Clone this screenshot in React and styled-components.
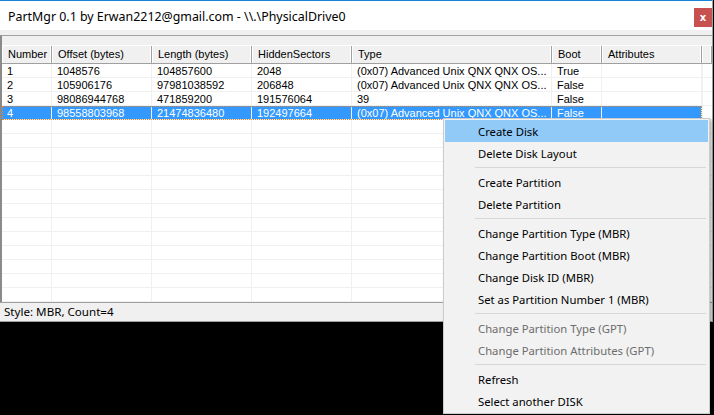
import styled, { createGlobalStyle } from "styled-components";

const GlobalStyle = createGlobalStyle`
    html, body {
        margin: 0;
        padding: 0;
        background: #000;
        overflow: hidden;
    }
`;

const columns = [
    { title: "Number", width: 50 },
    { title: "Offset (bytes)", width: 100 },
    { title: "Length (bytes)", width: 100 },
    { title: "HiddenSectors", width: 100 },
    { title: "Type", width: 200 },
    { title: "Boot", width: 50 },
    { title: "Attributes", width: 100 },
];

const rows = [
    ["1", "1048576", "104857600", "2048", "(0x07) Advanced Unix QNX QNX OS...", "True", ""],
    ["2", "105906176", "97981038592", "206848", "(0x07) Advanced Unix QNX QNX OS...", "False", ""],
    ["3", "98086944768", "471859200", "191576064", "39", "False", ""],
    ["4", "98558803968", "21474836480", "192497664", "(0x07) Advanced Unix QNX QNX OS...", "False", ""],
];

const menu = [
    { label: "Create Disk", active: true },
    { label: "Delete Disk Layout" },
    { sep: true },
    { label: "Create Partition" },
    { label: "Delete Partition" },
    { sep: true },
    { label: "Change Partition Type (MBR)" },
    { label: "Change Partition Boot (MBR)" },
    { label: "Change Disk ID (MBR)" },
    { label: "Set as Partition Number 1 (MBR)" },
    { sep: true },
    { label: "Change Partition Type (GPT)", disabled: true },
    { label: "Change Partition Attributes (GPT)", disabled: true },
    { sep: true },
    { label: "Refresh" },
    { label: "Select another DISK" },
];

const gridTemplate = columns.map((c) => `${c.width}px`).join(" ") + " 1fr";

const App = () => {
    return (
        <Screen>
            <GlobalStyle />
            <Window>
                <TitleBar>
                    <Title>PartMgr 0.1 by Erwan2212@gmail.com - \\.\PhysicalDrive0</Title>
                    <CloseButton>x</CloseButton>
                </TitleBar>
                <Body>
                    <ListBox>
                        <Strip />
                        <HeaderRow>
                            {columns.map((c) => (
                                <HeaderCell key={c.title}>{c.title}</HeaderCell>
                            ))}
                            <HeaderCell />
                        </HeaderRow>
                        <Rows>
                            {rows.map((r, i) => (
                                <Row key={i} $selected={i === 3}>
                                    {r.map((v, j) => (
                                        <Cell key={j}>{v}</Cell>
                                    ))}
                                    <Filler />
                                </Row>
                            ))}
                            {Array.from({ length: 14 }).map((_, i) => (
                                <Row key={"e" + i}>
                                    {columns.map((c) => (
                                        <Cell key={c.title} />
                                    ))}
                                    <Filler />
                                </Row>
                            ))}
                        </Rows>
                    </ListBox>
                    <StatusBar>Style: MBR, Count=4</StatusBar>
                </Body>
            </Window>

            <Menu>
                {menu.map((m, i) =>
                    m.sep ? (
                        <Separator key={i} />
                    ) : (
                        <MenuItem key={i} $active={m.active} $disabled={m.disabled}>
                            {m.label}
                        </MenuItem>
                    )
                )}
            </Menu>
        </Screen>
    );
};

export default App;

const Screen = styled.div`
    position: relative;
    width: 714px;
    height: 415px;
    background: #000;
    overflow: hidden;
`;

const Window = styled.div`
    width: 712px;
    display: flex;
    flex-direction: column;
    background: #f0f0f0;
    border-right: 1px solid #a0a0a0;
`;

const TitleBar = styled.div`
    height: 29px;
    border-top: 1px solid #1883d7;
    background: #fff;
    display: flex;
    align-items: center;
    justify-content: space-between;
    padding-left: 8px;
`;

const Title = styled.span`
    font-family: "Noto Sans", sans-serif;
    font-size: 12.4px;
    color: #000;
    margin-top: 2px;
`;

const CloseButton = styled.div`
    width: 18px;
    height: 19px;
    margin-right: 0;
    margin-top: 4px;
    background: #c75050;
    color: #fff;
    font-family: "DejaVu Sans", sans-serif;
    font-weight: 700;
    font-size: 10px;
    display: flex;
    align-items: center;
    justify-content: center;
`;

const Body = styled.div`
    display: flex;
    flex-direction: column;
    padding-top: 5px;
    height: 286px;
    border-bottom: 1px solid #a0a0a0;
`;

const ListBox = styled.div`
    height: 266px;
    border-top: 1px solid #a0a0a0;
    border-left: 2px solid #8a8a8a;
    background: #fff;
    display: flex;
    flex-direction: column;
    overflow: hidden;
`;

const Strip = styled.div`
    height: 9px;
    background: #f0f0f0;
    flex-shrink: 0;
`;

const HeaderRow = styled.div`
    display: grid;
    grid-template-columns: ${gridTemplate};
    height: 19px;
    flex-shrink: 0;
    background: #f0f0f0;
    border-top: 1px solid #fff;
    border-bottom: 1px solid #a0a0a0;
    box-sizing: border-box;
`;

const HeaderCell = styled.div`
    font-family: "Liberation Sans", sans-serif;
    font-size: 11px;
    color: #000;
    padding-left: 6px;
    line-height: 17px;
    border-right: 1px solid #a0a0a0;
    box-shadow: inset -1px 0 0 #fff, inset 1px 0 0 #fff;
    white-space: nowrap;
    overflow: hidden;
`;

const Rows = styled.div`
    display: flex;
    flex-direction: column;
`;

const Row = styled.div`
    display: grid;
    grid-template-columns: ${gridTemplate};
    height: 14px;
    flex-shrink: 0;
    position: relative;
    color: ${(p) => (p.$selected ? "#fff" : "#000")};

    & > div:not(:last-child) {
        background: ${(p) => (p.$selected ? "#3399ff" : "#fff")};
    }

    ${(p) =>
        p.$selected &&
        `
        &::after {
            content: "";
            position: absolute;
            left: 0;
            top: 0;
            width: 700px;
            height: 14px;
            box-sizing: border-box;
            border: 1px dotted #d98a3a;
            pointer-events: none;
        }
    `}
`;

const Cell = styled.div`
    font-family: "Liberation Sans", sans-serif;
    font-size: 11px;
    line-height: 14px;
    padding-left: 5px;
    border-right: 1px solid #f0f0f0;
    border-bottom: 1px solid #f0f0f0;
    white-space: nowrap;
    overflow: hidden;
`;

const Filler = styled.div`
    border-left: 1px solid #f0f0f0;
    border-bottom: 1px solid #f0f0f0;
    background: #fff;
`;

const StatusBar = styled.div`
    height: 17px;
    border-top: 1px solid #a0a0a0;
    background: #f0f0f0;
    padding-left: 4px;
    font-family: "Noto Sans", sans-serif;
    font-size: 11.6px;
    line-height: 17px;
    color: #000;
`;

const Menu = styled.div`
    position: absolute;
    left: 443px;
    top: 118px;
    width: 263px;
    padding: 1px;
    background: #f2f2f2;
    border: 1px solid #cccccc;
    box-shadow: 2px 2px 3px rgba(0, 0, 0, 0.3);
    display: flex;
    flex-direction: column;
`;

const MenuItem = styled.div`
    height: 22px;
    padding-left: 33px;
    display: flex;
    align-items: center;
    font-family: "Noto Sans", sans-serif;
    font-size: 11.3px;
    color: ${(p) => (p.$disabled ? "#6d6d6d" : "#000")};
    background: ${(p) => (p.$active ? "#91c9f7" : "transparent")};
`;

const Separator = styled.div`
    height: 1px;
    margin: 3px 2px 3px 30px;
    background: #d7d7d7;
`;
